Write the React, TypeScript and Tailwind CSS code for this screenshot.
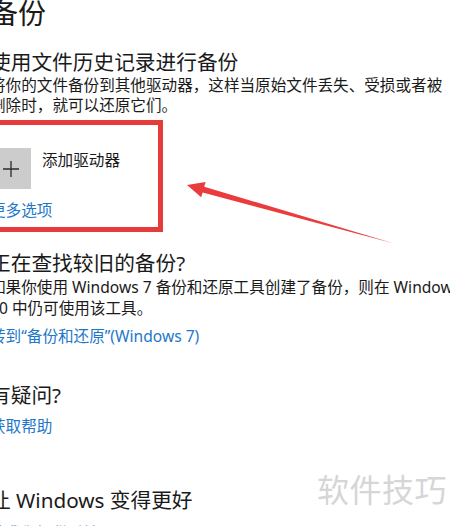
import React from 'react';

const font = { fontFamily: '"Noto Sans", "Noto Sans CJK SC", sans-serif' };

export default function App() {
  return (
    <div className="relative w-[450px] h-[526px] overflow-hidden bg-white text-[#1a1a1a]" style={font}>
      <div className="-ml-[10px] -mt-[4px] whitespace-nowrap">
        <h1 className="text-[28px] leading-[34px] font-normal">备份</h1>

        <h2 className="mt-[19px] text-[20.7px] leading-[26px]">使用文件历史记录进行备份</h2>
        <p className="text-[15.6px] leading-[20px]">
          将你的文件备份到其他驱动器，这样当原始文件丢失、受损或者被
          <br />
          删除时，就可以还原它们。
        </p>

        {/* annotation box round the drive section */}
        <div className="mt-[5px] -ml-[15px] w-[188px] border-[5px] border-[#e63b3b] pt-[23px] pb-[7px] pl-[10px]">
          <div className="flex items-start gap-[11px]">
            <div className="flex h-[41px] w-[41px] items-center justify-center bg-[#cccccc]">
              <svg width="18" height="18" viewBox="0 0 18 18">
                <path d="M9 1v16M1 9h16" stroke="#2b2b2b" strokeWidth="1.3" />
              </svg>
            </div>
            <span className="pt-[1.5px] text-[15.6px] leading-[20px]">添加驱动器</span>
          </div>
          <a className="mt-[11px] block text-[15.6px] leading-[20px] text-[#1e78c8]">更多选项</a>
        </div>

        <h2 className="mt-[17.5px] text-[20.7px] leading-[26px]">正在查找较旧的备份?</h2>
        <p className="mt-[1.5px] text-[15.6px] leading-[21px]">
          如果你使用 Windows 7 备份和还原工具创建了备份，则在 Windows
          <br />
          10 中仍可使用该工具。
        </p>
        <a className="mt-[6.5px] block text-[15.6px] leading-[20px] text-[#1e78c8]">
          转到“备份和还原”(Windows 7)
        </a>

        <h2 className="mt-[36.5px] text-[20.7px] leading-[26px]">有疑问?</h2>
        <a className="mt-[7.5px] block text-[15.6px] leading-[20px] text-[#1e78c8]">获取帮助</a>

        <h2 className="mt-[51.5px] text-[20.7px] leading-[26px]">让 Windows 变得更好</h2>
        <a className="mt-[10px] block text-[15.6px] leading-[20px] text-[#1e78c8]">给我们提供反馈</a>
      </div>

      {/* red arrow */}
      <svg className="absolute left-0 top-0" width="450" height="526" viewBox="0 0 450 526">
        <polygon
          points="187,185 205.6,181.9 204.2,186.7 394,243.5 202.6,192.5 201.2,197.3"
          fill="#ea3b3d"
        />
      </svg>

      {/* watermark */}
      <div className="absolute left-[317px] top-[470px] text-[32px] leading-[40px] text-[#d6d6d6] tracking-[0.5px]">
        软件技巧
      </div>
    </div>
  );
}
